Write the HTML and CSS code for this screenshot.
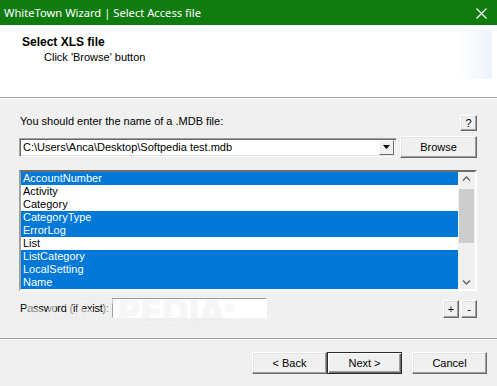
FILE: index.html
```html
<!DOCTYPE html>
<html lang="en">
  <head>
    <meta charset="UTF-8" />
    <title>WhiteTown Wizard | Select Access file</title>
    <link rel="stylesheet" href="styles.css">
  </head>
  <body>
    <div class="wizard">
      <div class="titlebar">
        <span class="title">WhiteTown Wizard | Select Access file</span>
        <svg class="close" width="11" height="11" viewBox="0 0 11 11">
          <path d="M0.5 0.5 L10.5 10.5 M10.5 0.5 L0.5 10.5" stroke="#fff" stroke-width="1.2" />
        </svg>
      </div>

      <div class="header">
        <div class="header-text">
          <h1>Select XLS file</h1>
          <p>Click 'Browse' button</p>
        </div>
        <div class="header-art"></div>
      </div>

      <div class="content">
        <div class="row-label">
          <span>You should enter the name of a .MDB file:</span>
          <button class="btn btn-small btn-help">?</button>
        </div>

        <div class="row-file">
          <div class="combo">
            <span class="combo-text">C:\Users\Anca\Desktop\Softpedia test.mdb</span>
            <span class="combo-drop">
              <svg width="7" height="4" viewBox="0 0 7 4"><path d="M0 0 H7 L3.5 4 Z" fill="#000" /></svg>
            </span>
          </div>
          <button class="btn btn-browse">Browse</button>
        </div>

        <div class="listbox">
          <ul class="items">
            <li class="sel">AccountNumber</li>
            <li>Activity</li>
            <li>Category</li>
            <li class="sel">CategoryType</li>
            <li class="sel">ErrorLog</li>
            <li>List</li>
            <li class="sel">ListCategory</li>
            <li class="sel">LocalSetting</li>
            <li class="sel">Name</li>
          </ul>
          <div class="scrollbar">
            <svg class="arrow" width="9" height="5" viewBox="0 0 9 5"><path d="M1 4.5 L4.5 1 L8 4.5" fill="none" stroke="#606060" stroke-width="1.3" /></svg>
            <div class="thumb-track"><div class="thumb"></div></div>
            <svg class="arrow" width="9" height="5" viewBox="0 0 9 5"><path d="M1 0.5 L4.5 4 L8 0.5" fill="none" stroke="#606060" stroke-width="1.3" /></svg>
          </div>
        </div>

        <div class="row-password">
          <label for="pwd">Password (if exist):</label>
          <input id="pwd" class="pwd" type="text" />
          <div class="spacer"></div>
          <button class="btn btn-small">+</button>
          <button class="btn btn-small">-</button>
        </div>
        <div class="watermark">SOFTPEDIA<sup>®</sup></div>
      </div>

      <div class="footer">
        <button class="btn btn-nav">&lt; Back</button>
        <button class="btn btn-nav btn-default">Next &gt;</button>
        <button class="btn btn-nav btn-cancel">Cancel</button>
      </div>
    </div>
  </body>
</html>
```

FILE: styles.css
```css
body {
  margin: 0;
  font-family: "Liberation Sans", Arial, sans-serif;
  font-size: 11px;
  color: #000;
}
.wizard {
  width: 497px;
  height: 386px;
  background-color: #f0f0f0;
  display: flex;
  flex-direction: column;
  overflow: hidden;
}
.titlebar {
  height: 25px;
  flex: none;
  background-color: #107c10;
  display: flex;
  align-items: center;
  justify-content: space-between;
  padding: 0 10px 0 4px;
}
.title {
  color: #fff;
  font-family: "Noto Sans", "Open Sans", sans-serif;
  font-size: 11.2px;
}
.close {
  margin-top: 1px;
}
.header {
  height: 72px;
  flex: none;
  background-color: #fff;
  border-bottom: 1px solid #a0a0a0;
  box-shadow: 0 1px 0 #fff;
  display: flex;
  justify-content: space-between;
}
.header-text {
  padding: 10px 0 0 22px;
}
.header h1 {
  margin: 0;
  font-size: 12px;
  line-height: 15px;
  font-weight: bold;
}
.header p {
  margin: 0;
  padding-left: 22px;
  line-height: 14px;
}
.header-art {
  width: 34px;
  height: 49px;
  margin: 5px 5px 0 0;
  background: linear-gradient(to right, #fff, #eef3fa);
}
.content {
  position: relative;
  padding: 17px 20px 0 19px;
  flex: none;
}
.btn {
  font-family: inherit;
  font-size: 11px;
  color: #000;
  background-color: #f0f0f0;
  border: 1px solid;
  border-color: #fff #696969 #696969 #fff;
  box-shadow: inset -1px -1px 0 #a0a0a0, inset 1px 1px 0 #e3e3e3;
  padding: 0;
  margin: 0;
}
.btn-small {
  width: 17px;
  height: 17px;
  line-height: 14px;
}
.row-label {
  display: flex;
  justify-content: space-between;
  align-items: flex-start;
  padding-left: 1px;
  height: 16px;
  line-height: 13px;
}
.btn-help {
  height: 16px;
}
.row-file {
  display: flex;
  align-items: center;
  margin-top: 5px;
  height: 22px;
}
.combo {
  width: 378px;
  height: 19px;
  box-sizing: border-box;
  background-color: #fff;
  border: 1px solid;
  border-color: #a0a0a0 #fff #fff #a0a0a0;
  box-shadow: inset 1px 1px 0 #696969, inset -1px -1px 0 #e3e3e3;
  display: flex;
  align-items: center;
  justify-content: space-between;
  padding: 0 2px 0 3px;
}
.combo-text {
  line-height: 13px;
}
.combo-drop {
  width: 15px;
  height: 15px;
  box-sizing: border-box;
  background-color: #f0f0f0;
  border: 1px solid;
  border-color: #fff #696969 #696969 #fff;
  display: flex;
  align-items: center;
  justify-content: center;
}
.btn-browse {
  width: 77px;
  height: 22px;
  margin-left: 3px;
}
.listbox {
  margin-top: 12px;
  width: 458px;
  height: 121px;
  box-sizing: border-box;
  border: 2px solid;
  border-color: #6d6d6d #fff #fff #a0a0a0;
  background-color: #fff;
  display: flex;
}
.items {
  list-style: none;
  margin: 0;
  padding: 0;
  flex: 1;
}
.items li {
  height: 13px;
  line-height: 13px;
  padding-left: 2px;
}
.items li.sel {
  background-color: #0078d7;
  color: #fff;
}
.scrollbar {
  width: 17px;
  background-color: #f0f0f0;
  display: flex;
  flex-direction: column;
  align-items: center;
  padding: 4px 0;
  box-sizing: border-box;
}
.thumb-track {
  flex: 1;
  width: 100%;
  padding-top: 8px;
}
.thumb {
  height: 54px;
  width: 15px;
  margin-left: 1px;
  background-color: #cdcdcd;
}
.row-password {
  display: flex;
  align-items: center;
  margin-top: 6px;
  height: 21px;
  padding-left: 1px;
}
.row-password label {
  width: 92px;
  white-space: nowrap;
  letter-spacing: -0.2px;
}
.pwd {
  width: 155px;
  height: 20px;
  box-sizing: border-box;
  margin: 0;
  border: 1px solid;
  border-color: #a0a0a0 #fff #fff #a0a0a0;
  background-color: #fff;
  font-family: inherit;
  font-size: 11px;
}
.spacer {
  flex: 1;
}
.row-password .btn-small {
  height: 18px;
  width: 16px;
  margin-left: 2px;
  margin-top: 3px;
}
.watermark {
  position: absolute;
  left: 24px;
  top: 195px;
  font-family: "DejaVu Sans", sans-serif;
  font-weight: bold;
  font-size: 33px;
  letter-spacing: -1px;
  color: rgba(255, 255, 255, 0.55);
  text-shadow: 0 0 2px rgba(0, 0, 0, 0.08);
  pointer-events: none;
}
.watermark sup {
  font-size: 12px;
}
.footer {
  margin-top: 20px;
  border-top: 1px solid #a0a0a0;
  box-shadow: inset 0 1px 0 #fff;
  display: flex;
  justify-content: flex-end;
  padding: 13px 10px 0 0;
  flex: 1;
}
.btn-nav {
  width: 75px;
  height: 22px;
}
.btn-default {
  border: 1px solid #2b2b2b;
  box-shadow: inset 1px 1px 0 #fff, inset -1px -1px 0 #696969, inset -2px -2px 0 #a0a0a0;
}
.btn-cancel {
  margin-left: 10px;
}
```
